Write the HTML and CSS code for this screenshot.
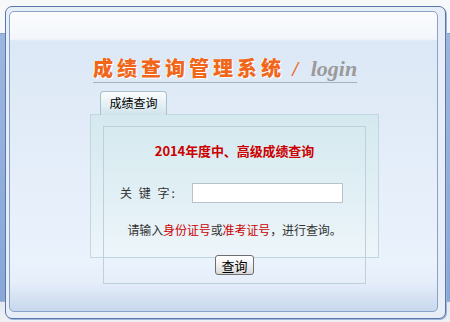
FILE: index.html
```html
<!DOCTYPE html>
<html lang="zh-CN">
<head>
<meta charset="utf-8">
<title>成绩查询管理系统</title>
<link rel="stylesheet" href="styles.css">
</head>
<body>
<div class="page">
  <div class="frame">
    <div class="panel">
      <div class="title-row">
        <span class="title-cn">成绩查询管理系统</span>
        <span class="slash">/</span>
        <span class="title-en">login</span>
      </div>
      <div class="tab-row">
        <div class="tab">成绩查询</div>
      </div>
      <div class="outer-box">
        <div class="inner-box">
          <div class="heading">2014年度中、高级成绩查询</div>
          <div class="field-row">
            <label class="field-label" for="kw">关 键 字:</label>
            <input class="field-input" id="kw" type="text">
          </div>
          <div class="hint">请输入<span class="red">身份证号</span>或<span class="red">准考证号</span>，进行查询。</div>
          <div class="btn-row">
            <button class="btn" type="button">查询</button>
          </div>
        </div>
      </div>
    </div>
  </div>
</div>
</body>
</html>
```
FILE: styles.css
```css
html, body {
  margin: 0;
  padding: 0;
}
body {
  width: 450px;
  height: 322px;
  overflow: hidden;
  font-family: "Noto Sans CJK SC", "Liberation Sans", sans-serif;
  background: linear-gradient(to bottom,
    #f7f8fa 0, #f7f8fa 33px,
    #6f8fc2 33px, #9db6df 34px, #88a6d6 301px,
    #5f7fb3 301px, #e4e8ee 302px, #eef0f3 322px);
}
.page {
  padding: 6px 0 0 5px;
}
.frame {
  width: 431px;
  height: 303px;
  border: 1px solid #5877aa;
  border-radius: 7px;
  padding: 4px;
  background: #e8eef7;
  box-shadow: 1px 1px 0 #9fb4d6;
}
.panel {
  box-sizing: border-box;
  width: 429px;
  height: 301px;
  margin-left: -1px;
  border: 1px solid #8aa2c8;
  border-radius: 5px;
  background: linear-gradient(to bottom,
    #fbfcfe 0, #f2f6fb 27px, #dce8f6 29px, #e2ecf8 120px,
    #eaf2fc 250px, #e6eefa 270px, #c8d8ee 299px);
  padding-top: 45px;
}
.title-row {
  margin-left: 83px;
  width: 264px;
  height: 25px;
  border-bottom: 1px solid #a7b0bd;
  white-space: nowrap;
  line-height: 22px;
}
.title-cn {
  font-family: "Noto Sans CJK SC", sans-serif;
  font-weight: 900;
  font-size: 20px;
  letter-spacing: 4px;
  color: #f0661a;
  text-shadow: 1px 1px 0 #fff, -1px 0 0 #fff8f0;
}
.slash {
  font-family: "Liberation Serif", serif;
  font-style: italic;
  font-weight: bold;
  font-size: 20px;
  color: #f0661a;
  margin-left: 4px;
}
.title-en {
  font-family: "Liberation Serif", serif;
  font-style: italic;
  font-weight: bold;
  font-size: 22px;
  color: #9a9a9a;
  margin-left: 9px;
}
.tab-row {
  margin-top: 8px;
  padding-left: 90px;
  height: 23px;
}
.tab {
  position: relative;
  z-index: 1;
  box-sizing: border-box;
  width: 67px;
  height: 24px;
  border: 1px solid #a9c1cd;
  border-bottom: none;
  border-radius: 4px 4px 0 0;
  background: linear-gradient(to bottom, #fafcfd 0, #eaf4f7 40%, #cfe4ea 100%);
  font-size: 12px;
  line-height: 22px;
  text-align: center;
  color: #000;
}
.outer-box {
  margin-left: 80px;
  width: 287px;
  height: 142px;
  border: 1px solid #c1d6e0;
  background: linear-gradient(to bottom, #d4e9ef 0, #e2f0f5 60%, #edf5fa 100%);
}
.inner-box {
  box-sizing: border-box;
  margin: 11px 0 0 12px;
  width: 263px;
  height: 158px;
  border: 1px solid #bdd0df;
  padding-top: 16px;
  text-align: center;
}
.heading {
  font-size: 13px;
  font-weight: bold;
  line-height: 16px;
  color: #cc0000;
  letter-spacing: -0.1px;
}
.field-row {
  margin-top: 24px;
  display: flex;
  align-items: center;
  height: 19px;
  padding-left: 16px;
}
.field-label {
  width: 72px;
  text-align: left;
  font-size: 12px;
  color: #333;
  letter-spacing: 2px;
}
.field-input {
  box-sizing: border-box;
  width: 151px;
  height: 20px;
  border: 1px solid #b9c1c9;
  background: #fff;
  margin: 0;
  padding: 0 2px;
}
.hint {
  margin-top: 20px;
  font-size: 12px;
  line-height: 16px;
  color: #333;
  letter-spacing: -0.1px;
}
.red {
  color: #cc0000;
}
.btn-row {
  margin-top: 17px;
  display: flex;
  justify-content: center;
}
.btn {
  box-sizing: border-box;
  width: 39px;
  height: 20px;
  margin: 0;
  padding: 0;
  border: 1px solid #6e6e6e;
  border-radius: 3px;
  background: linear-gradient(to bottom, #ffffff 0, #f3f3f3 45%, #d8d8d8 100%);
  font-family: "Noto Sans CJK SC", sans-serif;
  font-size: 13px;
  line-height: 17px;
  color: #000;
}
```
